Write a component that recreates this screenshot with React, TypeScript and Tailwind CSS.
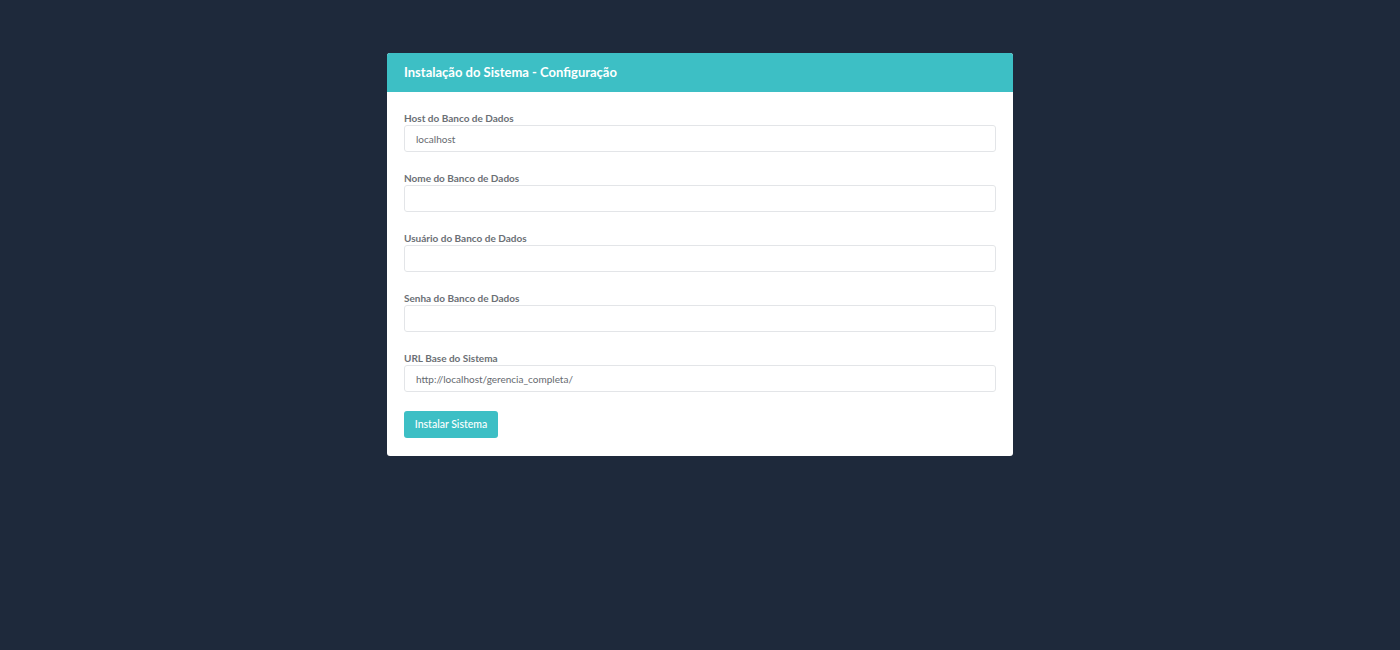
import { useState } from 'react';

interface Field {
    id: string;
    label: string;
    type: string;
    value: string;
}

const fields: Field[] = [
    { id: 'db_host', label: 'Host do Banco de Dados', type: 'text', value: 'localhost' },
    { id: 'db_name', label: 'Nome do Banco de Dados', type: 'text', value: '' },
    { id: 'db_user', label: 'Usuário do Banco de Dados', type: 'text', value: '' },
    { id: 'db_pass', label: 'Senha do Banco de Dados', type: 'password', value: '' },
    { id: 'base_url', label: 'URL Base do Sistema', type: 'text', value: 'http://localhost/gerencia_completa/' },
];

export default function App() {
    const [values, setValues] = useState<Record<string, string>>(
        () => Object.fromEntries(fields.map((f) => [f.id, f.value]))
    );

    return (
        <div className="min-h-[650px] w-full bg-[#1e293b] pt-[53px] font-['Lato','Liberation_Sans',sans-serif]">
            <div className="mx-auto w-[626px] overflow-hidden rounded-[3px] bg-white">
                <div className="flex h-[39px] items-center bg-[#3dbfc5] px-[17px]">
                    <h1 className="text-[13px] font-bold text-white">Instalação do Sistema - Configuração</h1>
                </div>

                <form className="flex flex-col px-[17px] pt-[20px] pb-[18px]" onSubmit={(e) => e.preventDefault()}>
                    {fields.map((field) => (
                        <div key={field.id} className="mb-[20px] flex flex-col">
                            <label htmlFor={field.id} className="text-[10px] leading-[13px] font-bold text-[#6b6f75]">
                                {field.label}
                            </label>
                            <input
                                id={field.id}
                                type={field.type}
                                value={values[field.id]}
                                onChange={(e) => setValues({ ...values, [field.id]: e.target.value })}
                                className="h-[27px] rounded-[3px] border border-[#e3e5e8] px-[11px] text-[10px] text-[#666a70] outline-none"
                            />
                        </div>
                    ))}

                    <div className="-mt-[2px]">
                        <button
                            type="submit"
                            className="h-[27px] w-[94px] rounded-[3px] bg-[#3dbfc5] text-[10.5px] font-medium text-white"
                        >
                            Instalar Sistema
                        </button>
                    </div>
                </form>
            </div>
        </div>
    );
}
